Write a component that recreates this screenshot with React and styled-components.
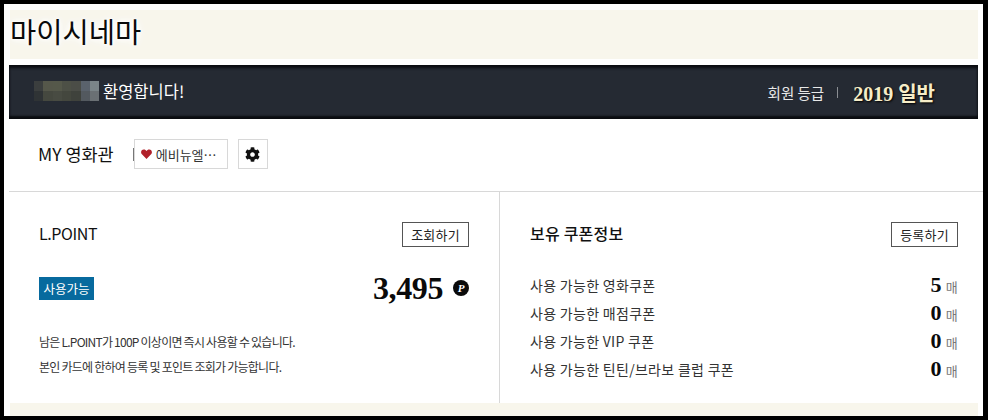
import React from 'react';
import styled, { createGlobalStyle } from 'styled-components';
import { FaCog } from 'react-icons/fa';

const GlobalStyle = createGlobalStyle`
  html, body {
    margin: 0;
    padding: 0;
    background: #000;
  }
  body {
    font-family: "Noto Sans CJK KR", "Noto Sans", sans-serif;
  }
`;

const Frame = styled.div`
  box-sizing: border-box;
  width: 988px;
  height: 420px;
  border: solid #000;
  border-width: 4px 5px 4px 4px;
  background: #fff;
  display: flex;
  flex-direction: column;
  overflow: hidden;
`;

const TitleBand = styled.div`
  height: 49px;
  margin: 6px 5px 6px 6px;
  background: #f8f6ec;
  display: flex;
  align-items: center;
`;

const Title = styled.h1`
  margin: 0 0 7px;
  font-size: 28.5px;
  font-weight: 400;
  line-height: 40px;
  color: #0a0a0a;
  text-shadow: 0 0 3px #fff, 0 0 5px #fff, 0 0 8px #fff, 0 0 10px #fff;
`;

const GradeBar = styled.div`
  box-sizing: border-box;
  height: 54px;
  margin: 0 5px;
  padding: 0 43px 0 25px;
  background: #252a33;
  box-shadow: inset 0 3px 3px #0a0c10, inset 0 -3px 2px #0a0c10;
  display: flex;
  align-items: center;
  justify-content: space-between;
  color: #fff;
`;

const Welcome = styled.div`
  display: flex;
  align-items: center;
  gap: 4px;
  padding-bottom: 2px;
  font-size: 16.5px;
`;

const Grade = styled.div`
  display: flex;
  align-items: center;
  font-size: 14.5px;
  color: #e8e8e8;
`;

const GradeSep = styled.span`
  width: 1px;
  height: 11px;
  margin: 0 15px 0 13px;
  background: #8a8d92;
`;

const GradeValue = styled.strong`
  font-family: "Liberation Serif", "Noto Sans CJK KR", serif;
  font-size: 20px;
  font-weight: 700;
  color: #f6edc8;
  text-shadow: 1px 1px 2px #000;
`;

const CinemaRow = styled.div`
  height: 72px;
  padding: 0 0 0 29px;
  margin-left: 5px;
  border-bottom: 1px solid #d8d8d8;
  display: flex;
  align-items: flex-start;
`;

const CinemaLabel = styled.h2`
  margin: 23px 20px 0 0;
  font-size: 17.5px;
  font-weight: 400;
  line-height: 24px;
  color: #111;
`;

const CinemaChip = styled.div`
  position: relative;
  box-sizing: border-box;
  width: 94px;
  height: 30px;
  margin-top: 20px;
  padding-left: 6px;
  border: 1px solid #d8d8d8;
  display: flex;
  align-items: center;
  gap: 4px;
  font-size: 13px;
  color: #333;
  white-space: nowrap;

  &::before {
    content: '';
    position: absolute;
    left: -2px;
    top: 8px;
    width: 1px;
    height: 13px;
    background: #777;
  }
`;

const GearButton = styled.div`
  box-sizing: border-box;
  width: 30px;
  height: 30px;
  margin: 20px 0 0 10px;
  border: 1px solid #d8d8d8;
  display: flex;
  align-items: center;
  justify-content: center;
  font-size: 15px;
  color: #111;
`;

const Columns = styled.div`
  flex: 1;
  margin-left: 5px;
  display: grid;
  grid-template-columns: 491px 1fr;
  min-height: 0;
`;

const Panel = styled.section`
  box-sizing: border-box;
  padding: ${(p) => p.$pad};
  border-right: ${(p) => (p.$divided ? '1px solid #d8d8d8' : 'none')};
`;

const PanelHead = styled.div`
  display: flex;
  align-items: center;
  justify-content: space-between;
  height: 25px;
`;

const PanelTitle = styled.h3`
  margin: 0 0 3px;
  font-size: 16px;
  font-weight: ${(p) => p.$weight || 500};
  color: #111;
  letter-spacing: ${(p) => p.$track || 0};
`;

const OutlineButton = styled.button`
  box-sizing: border-box;
  width: 67px;
  height: 25px;
  padding: 0;
  border: 1px solid #555;
  background: #fff;
  font-family: inherit;
  font-size: 13px;
  letter-spacing: 0.2px;
  color: #222;
`;

const PointRow = styled.div`
  margin-top: 21px;
  height: 40px;
  display: flex;
  align-items: center;
  justify-content: space-between;
`;

const Badge = styled.span`
  width: 55px;
  height: 23px;
  background: #076a9e;
  color: #fff;
  font-size: 12.5px;
  line-height: 23px;
  text-align: center;
`;

const PointValue = styled.div`
  display: flex;
  align-items: center;
  gap: 10px;
`;

const BigNumber = styled.strong`
  font-family: "Liberation Serif", serif;
  font-size: 32px;
  font-weight: 700;
  letter-spacing: -0.4px;
  color: #0a0a0a;
`;

const Notes = styled.div`
  margin-top: 21px;
  font-size: 12px;
  line-height: 25px;
  letter-spacing: -0.76px;
  color: #333;
`;

const CouponList = styled.ul`
  list-style: none;
  margin: 24px 0 0;
  padding: 0;
`;

const CouponRow = styled.li`
  height: 28px;
  display: flex;
  align-items: center;
  justify-content: space-between;
  font-size: 14px;
  color: #333;
  letter-spacing: 0.3px;
`;

const CouponCount = styled.span`
  display: flex;
  align-items: baseline;
  gap: 4px;
  font-size: 13px;
  color: #777;
`;

const CouponNumber = styled.strong`
  font-family: "Liberation Serif", serif;
  font-size: 22px;
  font-weight: 700;
  color: #0a0a0a;
`;

const BottomBand = styled.div`
  height: 13px;
  margin: 0 5px 0 6px;
  background: #f8f6ec;
`;

const mosaic = [
  ['#3b3e3e', '#55574a', '#55584a', '#4d5046', '#4b4d47', '#5a626c', '#7a8488'],
  ['#2f3335', '#45483f', '#484b42', '#44473e', '#3f423c', '#53595f', '#6a7074'],
];

const NameMosaic = () => (
  <svg width="65" height="20" viewBox="0 0 65 20" shapeRendering="crispEdges">
    {mosaic.map((row, y) =>
      row.map((fill, x) => (
        <rect key={`${x}-${y}`} x={x * 9.3} y={y * 10} width="9.4" height="10" fill={fill} />
      ))
    )}
  </svg>
);

const Heart = () => (
  <svg width="11" height="10" viewBox="0 0 11 10">
    <path d="M5.5 10 L0.7 5 C-0.6 3.3 0.2 0.4 2.8 0.4 C4 0.4 5 1.1 5.5 2 C6 1.1 7 0.4 8.2 0.4 C10.8 0.4 11.6 3.3 10.3 5 Z" fill="#b1202a" />
  </svg>
);

const PointMark = () => (
  <svg width="16" height="16" viewBox="0 0 16 16">
    <circle cx="8" cy="8" r="8" fill="#0a0a0a" />
    <text x="8" y="12" textAnchor="middle" fontFamily="Liberation Serif, serif" fontSize="11" fontWeight="700" fontStyle="italic" fill="#fff">P</text>
  </svg>
);

const coupons = [
  ['사용 가능한 영화쿠폰', 5],
  ['사용 가능한 매점쿠폰', 0],
  ['사용 가능한 VIP 쿠폰', 0],
  ['사용 가능한 틴틴/브라보 클럽 쿠폰', 0],
];

export default function App() {
  return (
    <>
      <GlobalStyle />
      <Frame>
        <TitleBand>
          <Title>마이시네마</Title>
        </TitleBand>
        <GradeBar>
          <Welcome>
            <NameMosaic />
            환영합니다!
          </Welcome>
          <Grade>
            회원 등급
            <GradeSep />
            <GradeValue>2019 일반</GradeValue>
          </Grade>
        </GradeBar>
        <CinemaRow>
          <CinemaLabel>MY 영화관</CinemaLabel>
          <CinemaChip>
            <Heart />
            에비뉴엘⋯
          </CinemaChip>
          <GearButton>
            <FaCog />
          </GearButton>
        </CinemaRow>
        <Columns>
          <Panel $divided $pad="30px 30px 0 30px">
            <PanelHead>
              <PanelTitle $weight={400} $track="-0.4px">L.POINT</PanelTitle>
              <OutlineButton>조회하기</OutlineButton>
            </PanelHead>
            <PointRow>
              <Badge>사용가능</Badge>
              <PointValue>
                <BigNumber>3,495</BigNumber>
                <PointMark />
              </PointValue>
            </PointRow>
            <Notes>
              남은 L.POINT가 100P 이상이면 즉시 사용할 수 있습니다.
              <br />
              본인 카드에 한하여 등록 및 포인트 조회가 가능합니다.
            </Notes>
          </Panel>
          <Panel $pad="30px 25px 0 30px">
            <PanelHead>
              <PanelTitle $track="0.2px">보유 쿠폰정보</PanelTitle>
              <OutlineButton>등록하기</OutlineButton>
            </PanelHead>
            <CouponList>
              {coupons.map(([label, count]) => (
                <CouponRow key={label}>
                  {label}
                  <CouponCount>
                    <CouponNumber>{count}</CouponNumber>매
                  </CouponCount>
                </CouponRow>
              ))}
            </CouponList>
          </Panel>
        </Columns>
        <BottomBand />
      </Frame>
    </>
  );
}
